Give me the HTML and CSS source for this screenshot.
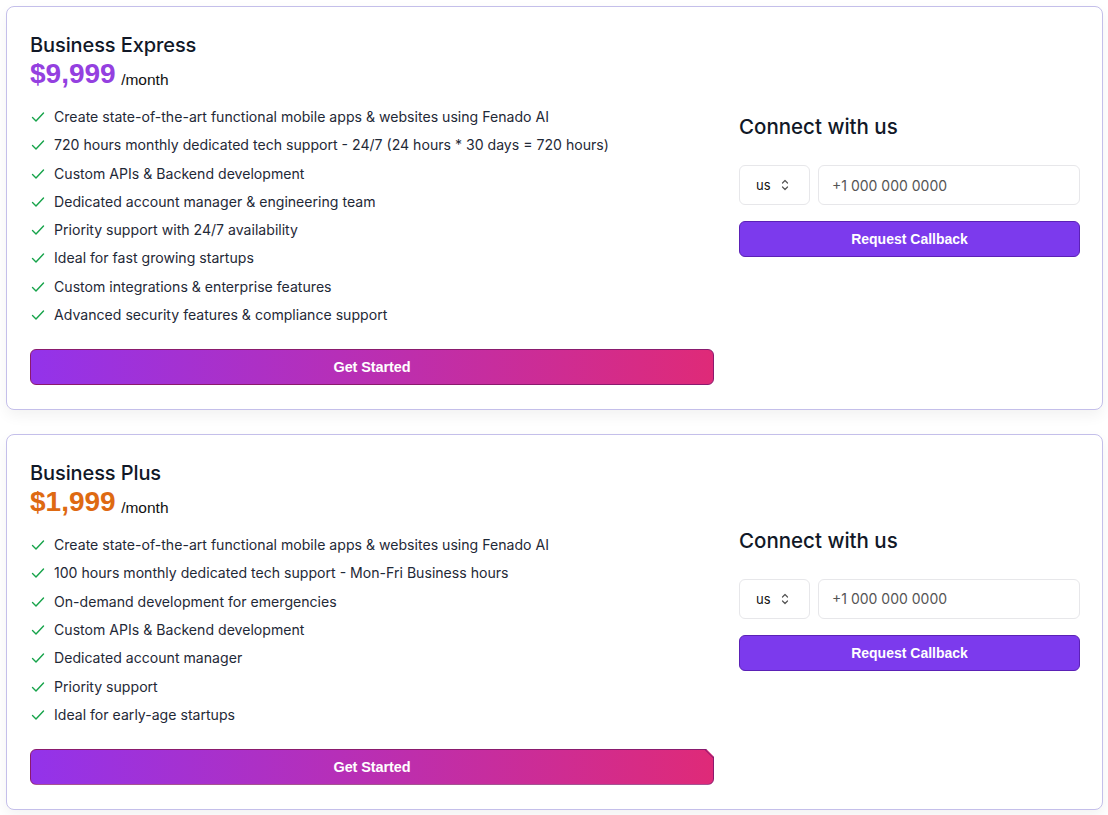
FILE: index.html
```html
<!DOCTYPE html>
<html lang="en">
<head>
<meta charset="utf-8">
<title>Plans</title>
<link rel="stylesheet" href="styles.css">
</head>
<body>
<div class="plans">
  <section class="card">
    <div class="main">
      <h2 class="title">Business Express</h2>
      <div class="price"><span class="amount purple">$9,999</span> <span class="per">/month</span></div>
      <ul class="features">
        <li><svg class="check" viewBox="0 0 16 16"><path d="M2.5 8.5l3.5 3.5 7.5-8"/></svg>Create state-of-the-art functional mobile apps &amp; websites using Fenado AI</li>
        <li><svg class="check" viewBox="0 0 16 16"><path d="M2.5 8.5l3.5 3.5 7.5-8"/></svg>720 hours monthly dedicated tech support - 24/7 (24 hours * 30 days = 720 hours)</li>
        <li><svg class="check" viewBox="0 0 16 16"><path d="M2.5 8.5l3.5 3.5 7.5-8"/></svg>Custom APIs &amp; Backend development</li>
        <li><svg class="check" viewBox="0 0 16 16"><path d="M2.5 8.5l3.5 3.5 7.5-8"/></svg>Dedicated account manager &amp; engineering team</li>
        <li><svg class="check" viewBox="0 0 16 16"><path d="M2.5 8.5l3.5 3.5 7.5-8"/></svg>Priority support with 24/7 availability</li>
        <li><svg class="check" viewBox="0 0 16 16"><path d="M2.5 8.5l3.5 3.5 7.5-8"/></svg>Ideal for fast growing startups</li>
        <li><svg class="check" viewBox="0 0 16 16"><path d="M2.5 8.5l3.5 3.5 7.5-8"/></svg>Custom integrations &amp; enterprise features</li>
        <li><svg class="check" viewBox="0 0 16 16"><path d="M2.5 8.5l3.5 3.5 7.5-8"/></svg>Advanced security features &amp; compliance support</li>
      </ul>
      <button class="start">Get Started</button>
    </div>
    <div class="connect">
      <h3 class="connect-title">Connect with us</h3>
      <div class="phone-row">
        <div class="country">us <svg class="updown" viewBox="0 0 10 14"><path d="M2.5 5l2.5-2.5 2.5 2.5M2.5 9l2.5 2.5 2.5-2.5"/></svg></div>
        <div class="phone">+1 000 000 0000</div>
      </div>
      <button class="callback">Request Callback</button>
    </div>
  </section>

  <section class="card">
    <div class="main">
      <h2 class="title">Business Plus</h2>
      <div class="price"><span class="amount orange">$1,999</span> <span class="per">/month</span></div>
      <ul class="features">
        <li><svg class="check" viewBox="0 0 16 16"><path d="M2.5 8.5l3.5 3.5 7.5-8"/></svg>Create state-of-the-art functional mobile apps &amp; websites using Fenado AI</li>
        <li><svg class="check" viewBox="0 0 16 16"><path d="M2.5 8.5l3.5 3.5 7.5-8"/></svg>100 hours monthly dedicated tech support - Mon-Fri Business hours</li>
        <li><svg class="check" viewBox="0 0 16 16"><path d="M2.5 8.5l3.5 3.5 7.5-8"/></svg>On-demand development for emergencies</li>
        <li><svg class="check" viewBox="0 0 16 16"><path d="M2.5 8.5l3.5 3.5 7.5-8"/></svg>Custom APIs &amp; Backend development</li>
        <li><svg class="check" viewBox="0 0 16 16"><path d="M2.5 8.5l3.5 3.5 7.5-8"/></svg>Dedicated account manager</li>
        <li><svg class="check" viewBox="0 0 16 16"><path d="M2.5 8.5l3.5 3.5 7.5-8"/></svg>Priority support</li>
        <li><svg class="check" viewBox="0 0 16 16"><path d="M2.5 8.5l3.5 3.5 7.5-8"/></svg>Ideal for early-age startups</li>
      </ul>
      <button class="start notched">Get Started</button>
    </div>
    <div class="connect">
      <h3 class="connect-title">Connect with us</h3>
      <div class="phone-row">
        <div class="country">us <svg class="updown" viewBox="0 0 10 14"><path d="M2.5 5l2.5-2.5 2.5 2.5M2.5 9l2.5 2.5 2.5-2.5"/></svg></div>
        <div class="phone">+1 000 000 0000</div>
      </div>
      <button class="callback">Request Callback</button>
    </div>
  </section>
</div>
</body>
</html>
```

FILE: styles.css
```css
* { box-sizing: border-box; }
html, body { margin: 0; background: #ffffff; }
body {
  padding: 6px 5px 6px 6px;
  font-family: Inter, "Noto Sans", sans-serif;
  color: #111827;
}
.plans {
  display: flex;
  flex-direction: column;
  gap: 24px;
}
.card {
  border: 1px solid #c4bfea;
  border-radius: 8px;
  background: #fff;
  box-shadow: 0 6px 14px rgba(0, 0, 0, 0.05);
  padding: 24px 22px 24px 23px;
  display: grid;
  grid-template-columns: 684px 1fr;
  column-gap: 25px;
}
.main { display: flex; flex-direction: column; }
.title {
  margin: 0;
  font-size: 20px;
  line-height: 28px;
  font-weight: 500;
  color: #111827;
  letter-spacing: -0.1px;
}
.price {
  height: 32px;
  line-height: 30px;
  white-space: nowrap;
}
.amount {
  font-family: "Liberation Sans", Arial, sans-serif;
  font-weight: 700;
  font-size: 28px;
}
.purple { color: #9440e0; }
.orange { color: #de6a12; }
.per {
  font-family: "Liberation Sans", Arial, sans-serif;
  font-size: 15.5px;
  color: #111;
  margin-left: 1px;
  vertical-align: -2px;
}
.features {
  list-style: none;
  margin: 16px 0 0;
  padding: 0;
  display: flex;
  flex-direction: column;
  gap: 8.3px;
}
.features li {
  display: flex;
  align-items: center;
  font-size: 14.1px;
  line-height: 20px;
  color: #1f2937;
}
.check {
  width: 16px;
  height: 16px;
  margin-right: 8px;
  flex: none;
  fill: none;
  stroke: #16a34a;
  stroke-width: 1.4;
  stroke-linecap: round;
  stroke-linejoin: round;
}
.start {
  position: relative;
  margin-top: 24px;
  height: 36px;
  width: 100%;
  border: 1px solid #8a1a6e;
  border-radius: 6px;
  background: linear-gradient(90deg, #9333ea 0%, #b62fb8 45%, #df2a78 100%);
  color: #fff;
  font-family: "Liberation Sans", Arial, sans-serif;
  font-weight: 700;
  font-size: 14.5px;
  letter-spacing: -0.1px;
  cursor: pointer;
}
.notched {
  clip-path: polygon(0 0, calc(100% - 8px) 0, 100% 8px, 100% 100%, 0 100%);
}
.notched::after {
  content: "";
  position: absolute;
  right: -2px;
  top: 3px;
  width: 12px;
  height: 1px;
  background: #8a1a6e;
  transform: rotate(45deg);
}
.connect {
  align-self: center;
  padding-bottom: 46px;
  display: flex;
  flex-direction: column;
}
.connect-title {
  margin: 0 0 24px;
  font-size: 20.5px;
  line-height: 28px;
  font-weight: 500;
  color: #111827;
}
.phone-row {
  display: flex;
  gap: 8px;
  height: 40px;
}
.country {
  width: 71px;
  flex: none;
  border: 1px solid #e7e7ea;
  border-radius: 6px;
  display: flex;
  align-items: center;
  padding-left: 16px;
  font-size: 13px;
  color: #111;
}
.updown {
  width: 10px;
  height: 14px;
  margin-left: 9px;
  fill: none;
  stroke: #555;
  stroke-width: 1.2;
  stroke-linecap: round;
  stroke-linejoin: round;
}
.phone {
  flex: 1;
  border: 1px solid #e7e7ea;
  border-radius: 6px;
  display: flex;
  align-items: center;
  padding-left: 13px;
  font-size: 14px;
  color: #555;
}
.callback {
  margin-top: 16px;
  height: 36px;
  width: 100%;
  border: 1px solid #5b21b6;
  border-radius: 6px;
  background: #7c3aed;
  color: #fff;
  font-family: "Liberation Sans", Arial, sans-serif;
  font-weight: 700;
  font-size: 14px;
  cursor: pointer;
}
```
